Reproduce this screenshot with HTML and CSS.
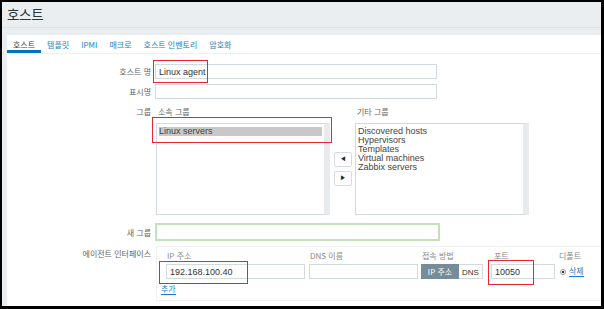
FILE: index.html
```html
<!DOCTYPE html>
<html lang="ko">
<head>
  <meta charset="UTF-8">
  <title>호스트</title>
  <link rel="stylesheet" href="styles.css">
</head>
<body>
  <div class="frame">
    <header class="page-head">
      <h1>호스트</h1>
    </header>

    <div class="card">
      <ul class="tabs">
        <li class="active">호스트</li>
        <li>템플릿</li>
        <li>IPMI</li>
        <li>매크로</li>
        <li>호스트 인벤토리</li>
        <li>암호화</li>
      </ul>

      <form class="form">
        <div class="row">
          <label class="label">호스트 명</label>
          <input class="text wide" type="text" value="Linux agent">
        </div>

        <div class="row">
          <label class="label">표시명</label>
          <input class="text wide" type="text">
        </div>

        <div class="row">
          <label class="label label-top">그룹</label>
          <div class="groups">
            <div class="group-col">
              <div class="col-head">소속 그룹</div>
              <div class="listbox">
                <div class="opt selected">Linux servers</div>
              </div>
            </div>
            <div class="move-btns">
              <button type="button">&#9664;</button>
              <button type="button">&#9654;</button>
            </div>
            <div class="group-col">
              <div class="col-head">기타 그룹</div>
              <div class="listbox">
                <div class="opt">Discovered hosts</div>
                <div class="opt">Hypervisors</div>
                <div class="opt">Templates</div>
                <div class="opt">Virtual machines</div>
                <div class="opt">Zabbix servers</div>
              </div>
            </div>
          </div>
        </div>

        <div class="row row-new">
          <label class="label">새 그룹</label>
          <input class="text new-group" type="text">
        </div>

        <div class="row">
          <label class="label label-top">에이전트 인터페이스</label>
          <div class="iface">
            <div class="iface-head">
              <span class="h-ip">IP 주소</span>
              <span class="h-dns">DNS 이름</span>
              <span class="h-conn">접속 방법</span>
              <span class="h-port">포트</span>
              <span class="h-def">디폴트</span>
            </div>
            <div class="iface-row">
              <span class="drag"></span>
              <input class="text ip" type="text" value="192.168.100.40">
              <input class="text dns" type="text">
              <div class="toggle">
                <span class="on">IP 주소</span>
                <span>DNS</span>
              </div>
              <input class="text port" type="text" value="10050">
              <span class="radio"></span>
              <a class="link" href="#">삭제</a>
            </div>
            <a class="link add" href="#">추가</a>
          </div>
        </div>
      </form>
    </div>

    <!-- red annotation boxes -->
    <span class="mark mark-name"></span>
    <span class="mark mark-group"></span>
    <span class="mark mark-ip"></span>
    <span class="mark mark-port"></span>
  </div>
</body>
</html>
```

FILE: styles.css
```css
html, body {
  margin: 0;
  padding: 0;
  background: #000;
}

.frame {
  position: relative;
  width: 599px;
  height: 304px;
  margin: 2px 0 0 2px;
  background: #ebeef0;
  overflow: hidden;
  font-family: "Liberation Sans", "Noto Sans CJK KR", sans-serif;
  font-size: 9px;
  color: #333;
}

.page-head {
  height: 25px;
  border-bottom: 1px solid #dde2e5;
  padding-left: 5px;
}

.page-head h1 {
  margin: 0;
  padding-top: 3px;
  font-family: "Noto Sans CJK KR", sans-serif;
  font-size: 13.5px;
  font-weight: normal;
  letter-spacing: -0.3px;
  line-height: 18px;
  color: #2a353b;
}

.card {
  margin: 7px 0 0 5px;
  height: 272px;
  background: #fff;
}

.tabs {
  display: flex;
  list-style: none;
  margin: 0;
  padding: 0;
  height: 18px;
  border-bottom: 1px solid #eef0f2;
  font-family: "Noto Sans CJK KR", sans-serif;
  font-size: 8px;
}

.tabs li {
  padding: 4px 6px 0;
  height: 11px;
  line-height: 11px;
  color: #1a7fc1;
  border-bottom: 3px solid transparent;
}

.tabs li.active {
  color: #3a454b;
  border-bottom-color: #0275b8;
}

.form {
  padding-top: 10px;
}

.row {
  display: flex;
  align-items: center;
  margin-bottom: 5px;
}

.label {
  width: 144px;
  margin-right: 4px;
  text-align: right;
  font-family: "Noto Sans CJK KR", sans-serif;
  font-size: 8px;
  color: #666;
  flex-shrink: 0;
}

.label-top {
  align-self: flex-start;
  line-height: 15px;
}

.text {
  box-sizing: border-box;
  height: 15px;
  border: 1px solid #d3dadd;
  padding: 0 3px;
  font-family: "Liberation Sans", sans-serif;
  font-size: 9px;
  color: #333;
  background: #fff;
  outline: none;
}

.wide {
  width: 282px;
}

.groups {
  display: flex;
  align-items: center;
  margin-left: 1px;
}

.group-col {
  display: flex;
  flex-direction: column;
}

.col-head {
  height: 14px;
  line-height: 15px;
  margin: 0 0 5px 2px;
  font-family: "Noto Sans CJK KR", sans-serif;
  font-size: 8px;
  color: #666;
}

.listbox {
  box-sizing: border-box;
  width: 174px;
  height: 92px;
  border: 1px solid #d3dadd;
  border-right: 6px solid #e8ebed;
  padding: 3px 2px;
  font-size: 9px;
  line-height: 9px;
  color: #444;
}

.opt.selected {
  background: #c8c8c8;
}

.move-btns {
  display: flex;
  flex-direction: column;
  gap: 4px;
  margin: 19px 3px 0 4px;
}

.move-btns button {
  width: 18px;
  height: 15px;
  padding: 0;
  border: 1px solid #d6dde0;
  border-radius: 2px;
  background: #fff;
  font-size: 6px;
  color: #1f2c33;
}

.row-new {
  margin-top: 8px;
}

.new-group {
  width: 285px;
  height: 18px;
  border: 2px solid #c4e0bb;
}

.iface {
  box-sizing: border-box;
  width: 446px;
  height: 55px;
  margin-left: 1px;
  border: 1px solid #eef0f2;
  border-right: 0;
  padding: 3px 0 0 3px;
}

.iface-head {
  position: relative;
  height: 11px;
  font-family: "Noto Sans CJK KR", sans-serif;
  font-size: 8px;
  color: #888;
  line-height: 11px;
}

.iface-head span {
  position: absolute;
  top: 0;
}

.h-ip { left: 7px; }
.h-dns { left: 150px; }
.h-conn { left: 262px; }
.h-port { left: 334px; }
.h-def { left: 399px; }

.iface-row {
  display: flex;
  align-items: center;
  margin-top: 3px;
  height: 15px;
}

.drag {
  width: 3px;
  height: 13px;
  margin-right: 3px;
  background-image: radial-gradient(#b8c2c7 0.6px, transparent 0.7px);
  background-size: 2px 2px;
}

.ip {
  width: 139px;
  margin-right: 4px;
}

.dns {
  width: 109px;
  margin-right: 3px;
}

.toggle {
  display: flex;
  height: 15px;
  margin-right: 8px;
  font-size: 8px;
  line-height: 15px;
}

.toggle span {
  box-sizing: border-box;
  width: 24px;
  text-align: center;
  border: 1px solid #d3dadd;
  border-left: 0;
  color: #333;
  font-family: "Liberation Sans", sans-serif;
}

.toggle span.on {
  width: 38px;
  border: 0;
  background: #768d99;
  color: #fff;
  font-family: "Noto Sans CJK KR", sans-serif;
}

.port {
  width: 64px;
  margin-right: 5px;
}

.radio {
  box-sizing: border-box;
  width: 6px;
  height: 6px;
  border-radius: 50%;
  border: 1px solid #999;
  background: radial-gradient(#333 1.2px, #fff 1.5px);
  margin-right: 3px;
}

.link {
  font-family: "Noto Sans CJK KR", sans-serif;
  font-size: 8px;
  color: #1a7fc1;
  text-decoration: none;
  border-bottom: 1px solid #1a7fc1;
  line-height: 10px;
}

.add {
  display: inline-block;
  margin: 5px 0 0 1px;
}

.mark {
  position: absolute;
  box-sizing: border-box;
  border: 1.5px solid #e8262e;
}

.mark-name {
  left: 151px;
  top: 58px;
  width: 55px;
  height: 23px;
}

.mark-group {
  left: 150px;
  top: 115px;
  width: 180px;
  height: 26px;
}

.mark-ip {
  left: 157px;
  top: 259px;
  width: 89px;
  height: 23px;
}

.mark-port {
  left: 486px;
  top: 258px;
  width: 46px;
  height: 25px;
}
```
